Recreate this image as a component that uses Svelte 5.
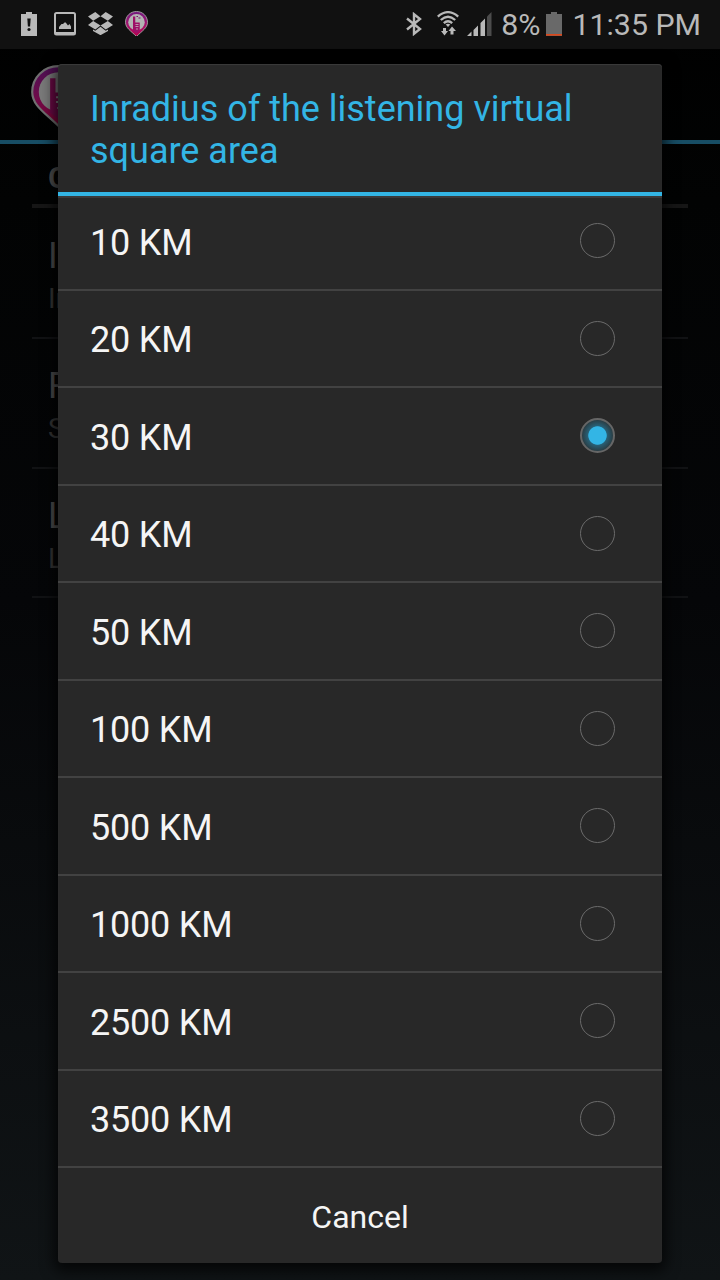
<script lang="ts">
	const options = [10, 20, 30, 40, 50, 100, 500, 1000, 2500, 3500];

	const preferences = [
		{ title: 'I', summary: 'In' },
		{ title: 'R', summary: 'S' },
		{ title: 'L', summary: 'L' }
	];

	let selected = $state(30);
</script>

{#snippet pin(size: number)}
	<svg class="pin" width={size} height={size * 1.13} viewBox="0 0 46 52">
		<path
			d="M23 1C10.500 1 1 10.500 1 22.500C1 34 12 40 23 51C34 40 45 34 45 22.500C45 10.500 35.500 1 23 1Z"
			fill="url(#pinFill)"
			stroke="#ccc"
			stroke-width="1.800"
		/>
		<circle cx="23" cy="22.500" r="16.500" fill="#ddd" />
		<path d="M16 11h4.500v12h9v17l-6.500 5l-7-5z" fill="#c2107e" />
		<path d="M23 11h3M27 14h4" stroke="#901080" stroke-width="2" />
		<path d="M21 27h6M21 31h6M22 36h4" stroke="#eee" stroke-width="1.600" />
	</svg>
{/snippet}

<svg class="defs" width="0" height="0">
	<defs>
		<linearGradient id="pinFill" x1="0" y1="0" x2="0" y2="1">
			<stop offset="0" stop-color="#8c1e9c" />
			<stop offset="0.550" stop-color="#cc1484" />
			<stop offset="1" stop-color="#e6005c" />
		</linearGradient>
	</defs>
</svg>

<div class="screen">
	<header class="status-bar">
		<div class="notifications">
			<svg width="16" height="24" viewBox="0 0 16 24">
				<path d="M5 0h6v2h5v22H0V2h5z" fill="#b9b9b9" />
				<path d="M6.300 6.500h3.400l-.6 8H6.900z" fill="#111" />
				<circle cx="8" cy="17.500" r="1.600" fill="#111" />
			</svg>
			<svg width="22" height="24" viewBox="0 0 22 24">
				<rect x="1" y="1" width="20" height="21.500" rx="1.500" fill="none" stroke="#b9b9b9" stroke-width="2" />
				<path d="M1 20h20v3H1z" fill="#b9b9b9" />
				<path d="M5 17v-2l2.500-3H9l1.500-1.500h1.200L14 13.500l1.500-1.500L17 14.500V17z" fill="#b9b9b9" />
			</svg>
			<svg width="25" height="23" viewBox="0 0 25 23">
				<path
					d="M7.300 0L12.500 4.200L5.200 8.700L0 4.500zM17.700 0L25 4.500L19.800 8.700L12.500 4.200zM5.200 9L12.500 13.500L7.300 17.600L0 13.100zM19.800 9L25 13.100L17.700 17.600L12.500 13.500zM12.500 14.700L17.700 18.800L20 17.500V19L12.500 23.200L5 19V17.500L7.300 18.800z"
					fill="#b9b9b9"
				/>
			</svg>
			<span class="mini">{@render pin(23)}</span>
		</div>
		<div class="system">
			<svg class="bluetooth" width="16" height="24" viewBox="0 0 16 24">
				<path d="M1 6.500L14 17L8 21.800V2.200L14 7L1 17.500" fill="none" stroke="#b9b9b9" stroke-width="2.400" />
			</svg>
			<svg class="wifi" width="22" height="25" viewBox="0 0 22 25">
				<g fill="none" stroke="#b9b9b9" stroke-width="2.300">
					<path d="M.8 5.600Q11-3.300 21.200 5.600" />
					<path d="M3.800 9Q11 2.500 18.200 9" />
					<path d="M6.800 12.200Q11 8.400 15.200 12.200" />
				</g>
				<path d="M8.700 13.500Q11 12 13.300 13.500L11 16z" fill="#b9b9b9" />
				<path d="M6 17h3V20h2l-3.500 4.500L4 20h2zM13.500 23.500h3V20h2.500L15 15.500l-3.500 4.500h2z" fill="#b9b9b9" />
			</svg>
			<svg class="signal" width="25" height="24" viewBox="0 0 25 24">
				<path d="M0 24L4.500 19.500V24zM6.500 18L11 13.500V24H6.500zM13.500 11L18 6.500V24h-4.500z" fill="#b9b9b9" />
				<path d="M20 4.500L24.500 0V24H20z" fill="#4c4c4c" />
			</svg>
			<span class="percent">8%</span>
			<svg class="battery" width="16" height="24" viewBox="0 0 16 24">
				<path d="M5 0h6v2h5v22H0V2h5z" fill="#696969" />
				<path d="M0 22h16v1.700H0z" fill="#d9481c" />
			</svg>
			<span class="clock">11:35 PM</span>
		</div>
	</header>

	<div class="action-bar">
		<span class="app-icon">{@render pin(55)}</span>
	</div>

	<section class="preferences">
		<h2>G</h2>
		{#each preferences as item}
			<div class="preference">
				<div class="name">{item.title}</div>
				<div class="summary">{item.summary}</div>
			</div>
		{/each}
	</section>

	<div class="dialog" role="dialog">
		<h1>Inradius of the listening virtual square area</h1>
		<div class="list">
			{#each options as km}
				<button class="option" onclick={() => (selected = km)}>
					<span>{km} KM</span>
					<span class="radio" class:checked={selected === km}></span>
				</button>
			{/each}
		</div>
		<button class="cancel">Cancel</button>
	</div>
</div>

<style>
	:global(body) {
		background: #000;
	}

	.defs {
		position: absolute;
	}

	.screen {
		position: relative;
		width: 720px;
		height: 1280px;
		overflow: hidden;
		background: linear-gradient(#000 0, #020303 200px, #050608 600px, #101416 1280px);
		font-family: Roboto, sans-serif;
	}

	svg {
		display: block;
	}

	button {
		border: 0;
		padding: 0;
		background: none;
		font-family: inherit;
		color: #f5f5f5;
	}

	.status-bar {
		display: flex;
		justify-content: space-between;
		box-sizing: border-box;
		height: 49px;
		padding: 0 19px 0 21px;
		background: #111;
		color: #b9b9b9;
	}

	.notifications,
	.system {
		display: flex;
		align-items: center;
		height: 47px;
	}

	.notifications {
		gap: 17px;
	}

	.notifications svg:nth-child(3) {
		margin-left: -5px;
	}

	.mini {
		margin-left: -5px;
		opacity: 0.8;
	}

	.bluetooth {
		margin-right: 15px;
	}

	.wifi {
		margin-right: 8px;
	}

	.signal {
		margin-right: 9px;
	}

	.percent,
	.clock {
		font-size: 30.3px;
		line-height: 47px;
		padding-top: 1px;
		white-space: nowrap;
	}

	.battery {
		margin: 0 10px 0 6px;
	}

	.action-bar {
		box-sizing: border-box;
		height: 95px;
		padding: 16px 0 0 31px;
		border-bottom: 4px solid #174d64;
	}

	.app-icon {
		display: block;
		opacity: 0.55;
	}

	.preferences {
		padding: 0 32px;
		color: #4c4c4c;
	}

	h2 {
		box-sizing: border-box;
		height: 64px;
		margin: 0;
		padding: 17px 16px 0;
		border-bottom: 4px solid #161616;
		font-size: 29px;
		line-height: 34px;
	}

	.preference {
		box-sizing: border-box;
		height: 129.5px;
		padding: 26px 16px 0;
		border-bottom: 2px solid #111214;
	}

	.preference:nth-child(2) {
		height: 131px;
		padding-top: 27px;
	}

	.name {
		font-size: 36px;
		line-height: 42px;
	}

	.summary {
		font-size: 28px;
		line-height: 43px;
		color: #343434;
	}

	.dialog {
		position: absolute;
		top: 64px;
		left: 58px;
		width: 604px;
		height: 1199px;
		border-radius: 4px;
		background: #282828;
		box-shadow:
			inset 0 1px 1px #3b3b3b,
			0 4px 14px 4px rgba(0, 0, 0, 0.7);
	}

	h1 {
		box-sizing: border-box;
		height: 132px;
		margin: 0;
		padding: 24px 32px 0;
		border-bottom: 4px solid #33b5e5;
		color: #33b5e5;
		font-size: 36px;
		font-weight: 400;
		line-height: 42px;
	}

	.list {
		display: flex;
		flex-direction: column;
		justify-content: flex-end;
		height: 972px;
		overflow: hidden;
		box-shadow: inset 0 2px #3a3a3a;
	}

	.option {
		display: flex;
		flex: none;
		align-items: center;
		justify-content: space-between;
		box-sizing: border-box;
		height: 97.5px;
		padding: 4px 47px 0 32px;
		border-bottom: 2px solid #424242;
		font-size: 36px;
		letter-spacing: -0.2px;
	}

	.radio {
		box-sizing: border-box;
		width: 35px;
		height: 35px;
		margin-top: -4px;
		border: 1.5px solid #6b6b6b;
		border-radius: 50%;
	}

	.radio.checked {
		border: 2px solid #666;
		background:
			radial-gradient(circle, #33b5e5 8.8px, transparent 9.6px),
			radial-gradient(circle, #28637a 9px, #2a4048 15px);
	}

	.cancel {
		display: block;
		width: 100%;
		height: 95px;
		padding-top: 3px;
		font-size: 32px;
	}
</style>
